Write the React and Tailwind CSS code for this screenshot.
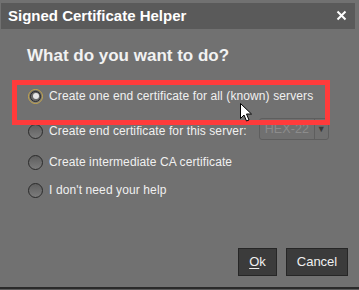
import React from "react";

const Radio = ({ checked }) => (
  <span
    className={`relative flex h-[15px] w-[15px] shrink-0 items-center justify-center rounded-full border ${
      checked ? "border-[#c9a94c]" : "border-[#2b2b2b]"
    } bg-gradient-to-b from-[#5f5f5f] to-[#7c7c7c]`}
  >
    {checked && (
      <span className="flex h-[11px] w-[11px] items-center justify-center rounded-full border border-[#2a2a2a] bg-[#6a6a6a]">
        <span className="h-[6px] w-[6px] rounded-full bg-[#e6e6e6]" />
      </span>
    )}
  </span>
);

const Option = ({ checked, children, className = "" }) => (
  <div className={`flex h-[28px] items-center gap-[6px] pl-[28px] ${className}`}>
    <Radio checked={checked} />
    {children}
  </div>
);

export default function App() {
  return (
    <div
      className="relative h-[290px] w-[359px] overflow-hidden bg-[#717171] pt-[3px] text-[#f0f0f0]"
      style={{ fontFamily: '"Liberation Sans", Arial, sans-serif' }}
    >
      {/* TITLE BAR */}
      <div className="ml-[1px] flex h-[26px] w-[354px] items-center justify-between bg-[#5a5a5a] pl-[7px] pr-[8px]">
        <span className="text-[15px] font-bold text-white">Signed Certificate Helper</span>
        <svg width="11" height="11" viewBox="0 0 11 11" className="mt-[-1px]">
          <path d="M1.5 1.5 L9.5 9.5 M9.5 1.5 L1.5 9.5" stroke="#fff" strokeWidth="2" />
        </svg>
      </div>

      {/* HEADING */}
      <h2 className="mt-[17px] pl-[27px] text-[17px] font-bold leading-[20px] text-[#f2f2f2]">
        What do you want to do?
      </h2>

      {/* OPTIONS */}
      <div className="mt-[16px] text-[12px] leading-[16px] tracking-[0.11px]">
        <Option checked>
          <span>Create one end certificate for all (known) servers</span>
        </Option>
        <Option className="mt-[7px]">
          <span>Create end certificate for this server:</span>
          <div className="ml-[6px] mt-[-4px] flex h-[22px] w-[70px] items-center rounded-[3px] border border-[#5e5e5e] bg-[#707070] text-[12.5px]">
            <span className="flex-1 pl-[5px] text-[#8c8c8c]">HEX-22</span>
            <span className="flex h-full w-[14px] items-center justify-center border-l border-[#5e5e5e] text-[9px] text-[#3a3a3a]">
              ▼
            </span>
          </div>
        </Option>
        <Option className="mt-[3px]">
          <span>Create intermediate CA certificate</span>
        </Option>
        <Option>
          <span>I don't need your help</span>
        </Option>
      </div>

      {/* BUTTONS */}
      <div className="mt-[44px] flex justify-end gap-[9px] pr-[11px] text-[13px]">
        <button className="h-[28px] w-[39px] border border-[#262626] bg-[#3b3b3b] text-[#f0f0f0]">
          <span className="underline underline-offset-2">O</span>k
        </button>
        <button className="h-[28px] w-[62px] border border-[#262626] bg-[#3b3b3b] text-[#f0f0f0]">
          Cancel
        </button>
      </div>

      {/* BOTTOM EDGE */}
      <div className="absolute bottom-0 left-0 h-[3px] w-full border-t-2 border-[#2a2a2a] bg-[#5c5c5c]" />

      {/* ANNOTATION */}
      <div className="pointer-events-none absolute left-[12px] top-[80px] h-[45px] w-[318px] border-[5px] border-[#ff3b3b]" />

      {/* CURSOR */}
      <svg className="absolute left-[240px] top-[103px]" width="13" height="19" viewBox="0 0 13 19">
        <path
          d="M0.5 0.5 L0.5 15.5 L4 12 L6.5 18 L9 17 L6.5 11 L11.5 11 Z"
          fill="#fff"
          stroke="#000"
          strokeWidth="1"
          strokeLinejoin="round"
        />
      </svg>
    </div>
  );
}
